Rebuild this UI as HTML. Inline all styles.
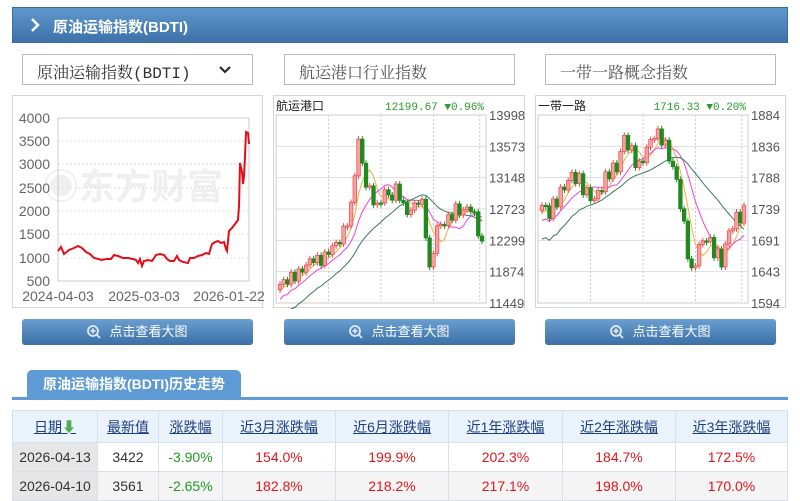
<!DOCTYPE html>
<html><head><meta charset="utf-8"><style>
*{margin:0;padding:0;box-sizing:border-box}
body{width:800px;height:500px;background:#fff;font-family:"Liberation Sans","Noto Sans CJK SC",sans-serif;position:relative;overflow:hidden}
.abs{position:absolute}
.hdr{left:12px;top:7px;width:776px;height:36px;background:linear-gradient(#5e98cb,#3d72aa);border:1px solid #3a6ca0}
.hdr span{position:absolute;left:40px;top:8px;color:#fff;font-weight:bold;font-size:15px}
.sel{top:54px;height:31px;border:1px solid #bbb;font-family:"Liberation Mono","Noto Serif CJK SC",monospace;font-size:16px;color:#333;padding:5px 0 0 14px}
.sel.g{color:#555}
.panel{top:95px;height:213px;border:1px solid #d6d6d6}
.btn{top:319px;height:26px;border-radius:3px;background:linear-gradient(#6a9fd0,#3b6fa6);color:#fff;font-size:13px;text-align:center;line-height:26px}
.tab{left:27px;top:370px;width:214px;height:29px;background:#5e9ad4;border-radius:5px 5px 0 0;color:#fff;font-weight:bold;font-size:14px;text-align:center;line-height:29px}
.tline{left:12px;top:397px;width:776px;height:3px;background:#5e9ad4}
table{position:absolute;left:12px;top:410px;width:776px;border-collapse:collapse;font-size:14px}
td,th{border:1px solid #d4e2f0;text-align:center;height:29px;font-weight:normal}
th{background:#eaf3fc;color:#1e3f80;text-decoration:underline}
td{color:#333}
.r{color:#e4161b}.gr{color:#229922}
</style></head><body>
<div class="abs hdr"><svg class="abs" style="left:17px;top:10px" width="10" height="14"><path d="M2 1 L8 7 L2 13" stroke="#fff" stroke-width="2.5" fill="none"/></svg><span>原油运输指数(BDTI)</span></div>
<div class="abs sel" style="left:22px;width:231px">原油运输指数(BDTI)<svg class="abs" style="left:196px;top:11px" width="12" height="9"><path d="M1 1 L6 6 L11 1" stroke="#222" stroke-width="2" fill="none"/></svg></div>
<div class="abs sel g" style="left:284px;width:231px">航运港口行业指数</div>
<div class="abs sel g" style="left:545px;width:231px">一带一路概念指数</div>

<div class="abs panel" style="left:12px;width:251px">
<svg width="251" height="213" id="c1" style="font-family:'Liberation Sans',sans-serif;font-size:14px;fill:#666">
<text x="30" y="103" font-size="36" fill="#efefef" font-weight="bold" style="font-family:'Noto Sans CJK SC',sans-serif">&#x25C9;东方财富</text>
<g stroke="#ddd" stroke-dasharray="2,2"><line x1="45" x2="236" y1="45" y2="45"/><line x1="45" x2="236" y1="68" y2="68"/><line x1="45" x2="236" y1="92" y2="92"/><line x1="45" x2="236" y1="115" y2="115"/><line x1="45" x2="236" y1="138" y2="138"/><line x1="45" x2="236" y1="162" y2="162"/></g>
<rect x="45" y="22" width="191" height="163" fill="none" stroke="#ccc"/>
<g text-anchor="end"><text x="37" y="27">4000</text><text x="37" y="50">3500</text><text x="37" y="73">3000</text><text x="37" y="97">2500</text><text x="37" y="120">2000</text><text x="37" y="143">1500</text><text x="37" y="167">1000</text><text x="37" y="190">500</text></g>
<g text-anchor="middle"><text x="45" y="205">2024-04-03</text><text x="131" y="205">2025-03-03</text><text x="216" y="205">2026-01-22</text></g>
<polyline fill="none" stroke="#e0101a" stroke-width="2" points="45,155 48,151 51,158 56,154 61,152 65,150 69,152 73,156 77,158 81,162 85,163 89,164 93,163 98,163 101,159 105,160 110,162 115,162 120,163 123,164 125,167 127,163 129,170 131,165 135,164 139,165 143,159 147,158 151,159 154,163 157,165 161,165 164,160 166,164 170,166 175,167 177,162 181,162 185,160 189,159 193,157 196,158 199,148 202,146 205,145 208,147 211,146 213,153 214,155 216,135 219,132 222,128 225,124 226,110 227,67 229,76 230,88 231,80 232,60 233,36 235,37 236,48"/>
</svg></div>

<div class="abs panel" style="left:273px;width:252px">
<svg width="252" height="213" id="c2" style="font-family:'Liberation Sans',sans-serif;font-size:12px;fill:#444"></svg></div>
<div class="abs panel" style="left:535px;width:251px">
<svg width="251" height="213" id="c3" style="font-family:'Liberation Sans',sans-serif;font-size:12px;fill:#444"></svg></div>

<div class="abs btn" style="left:22px;width:231px"><svg style="vertical-align:-3px;margin-right:8px" width="14" height="14"><circle cx="6" cy="6" r="5" fill="none" stroke="#dde8f4" stroke-width="1.8"/><path d="M6 3.5v5M3.5 6h5M9.5 9.5l3.5 3.5" stroke="#dde8f4" stroke-width="1.8"/></svg>点击查看大图</div>
<div class="abs btn" style="left:284px;width:231px"><svg style="vertical-align:-3px;margin-right:8px" width="14" height="14"><circle cx="6" cy="6" r="5" fill="none" stroke="#dde8f4" stroke-width="1.8"/><path d="M6 3.5v5M3.5 6h5M9.5 9.5l3.5 3.5" stroke="#dde8f4" stroke-width="1.8"/></svg>点击查看大图</div>
<div class="abs btn" style="left:545px;width:231px"><svg style="vertical-align:-3px;margin-right:8px" width="14" height="14"><circle cx="6" cy="6" r="5" fill="none" stroke="#dde8f4" stroke-width="1.8"/><path d="M6 3.5v5M3.5 6h5M9.5 9.5l3.5 3.5" stroke="#dde8f4" stroke-width="1.8"/></svg>点击查看大图</div>

<div class="abs tab">原油运输指数(BDTI)历史走势</div>
<div class="abs tline"></div>
<table>
<tr style="height:32px"><th style="width:85px">日期<span style="color:#4caf50;text-decoration:none">&#x2B07;</span></th><th style="width:61px">最新值</th><th style="width:64px">涨跌幅</th><th style="width:113px">近3月涨跌幅</th><th style="width:113px">近6月涨跌幅</th><th style="width:114px">近1年涨跌幅</th><th style="width:113px">近2年涨跌幅</th><th>近3年涨跌幅</th></tr>
<tr><td style="background:#e6e6e6">2026-04-13</td><td>3422</td><td class="gr">-3.90%</td><td class="r">154.0%</td><td class="r">199.9%</td><td class="r">202.3%</td><td class="r">184.7%</td><td class="r">172.5%</td></tr>
<tr style="background:#f4f4f4"><td style="background:#e6e6e6">2026-04-10</td><td>3561</td><td class="gr">-2.65%</td><td class="r">182.8%</td><td class="r">218.2%</td><td class="r">217.1%</td><td class="r">198.0%</td><td class="r">170.0%</td></tr>
</table>
<script>
function chart(id,name,val,pct,labels,key,w,noise){
 var s=document.getElementById(id),h='';
 var L=2,R=w,T=19,B=207;
 h+='<text x="2" y="14" font-size="12" fill="#222" style="font-family:\'Noto Sans CJK SC\',sans-serif">'+name+'</text>';
 h+='<text x="'+(R-2)+'" y="14" text-anchor="end" fill="#2a9a2a" font-size="11" style="font-family:\'Liberation Mono\',monospace">'+val+' ▼'+pct+'</text>';
 for(var i=0;i<7;i++){var y=T+(B-T)*i/6;h+='<line x1="'+L+'" x2="'+R+'" y1="'+y+'" y2="'+y+'" stroke="#ddd"/>';h+='<text x="'+(R+3)+'" y="'+(y+5)+'" font-size="13" fill="#555">'+labels[i]+'</text>';}
 [0.25,0.5,0.75,0.97].forEach(function(f){var x=L+(R-L)*f;h+='<line x1="'+x+'" x2="'+x+'" y1="'+T+'" y2="'+B+'" stroke="#ccc" stroke-dasharray="2,2"/>';});
 h+='<rect x="'+L+'" y="'+T+'" width="'+(R-L)+'" height="'+(B-T)+'" fill="none" stroke="#ccc"/>';
 var n=55,c=[];for(i=0;i<n;i++){var p=i/(n-1)*(key.length-1),k=Math.floor(p),f=p-k,a=key[k],b=key[Math.min(k+1,key.length-1)];c.push(a+(b-a)*f+Math.sin(i*2.7)*noise);}
 function Y(v){return T+(B-T)*(1-v/100)}
 function ma(m,col){var pts=[];for(var i=0;i<n;i++){var st=Math.max(0,i-m),sm=0;for(var j=st;j<=i;j++)sm+=c[j];var v=sm/(i-st+1);if(i<m)v-= (m-i)*0.9;pts.push((L+4+i*(R-L-8)/(n-1)).toFixed(1)+','+Y(v).toFixed(1));}h+='<polyline fill="none" stroke="'+col+'" stroke-width="1" points="'+pts.join(' ')+'"/>';}
 ma(4,'#f0b040');ma(9,'#ee44dd');ma(20,'#3a7a5a');
 for(i=0;i<n;i++){var x=L+4+i*(R-L-8)/(n-1),o=i?c[i-1]:c[0]-3,cl=c[i],up=cl>=o,col=up?'#e84a4a':'#1f8a1f';var y1=Y(Math.max(o,cl)),y2=Y(Math.min(o,cl));if(y2-y1<1.5)y2=y1+1.5;
 h+='<line x1="'+x+'" x2="'+x+'" y1="'+(y1-3)+'" y2="'+(y2+3)+'" stroke="'+col+'"/><rect x="'+(x-1.8)+'" y="'+y1+'" width="3.6" height="'+(y2-y1)+'" fill="'+(up?'#f7a0a0':col)+'" stroke="'+col+'" stroke-width="0.7"/>';}
 s.innerHTML=h;
}
chart('c2','航运港口','12199.67','0.96%',['13998','13573','13148','12723','12299','11874','11449'],[10,12,14,16,20,24,22,25,30,32,40,52,88,65,58,50,60,55,62,50,48,55,52,15,40,42,45,50,48,52,45,30],212,3);
chart('c3','一带一路','1716.33','0.20%',['1884','1836','1788','1739','1691','1643','1594'],[52,48,55,62,68,65,58,55,62,70,72,88,80,72,82,90,88,78,65,40,15,30,35,28,22,38,45,48],212,4);
</script>
</body></html>
